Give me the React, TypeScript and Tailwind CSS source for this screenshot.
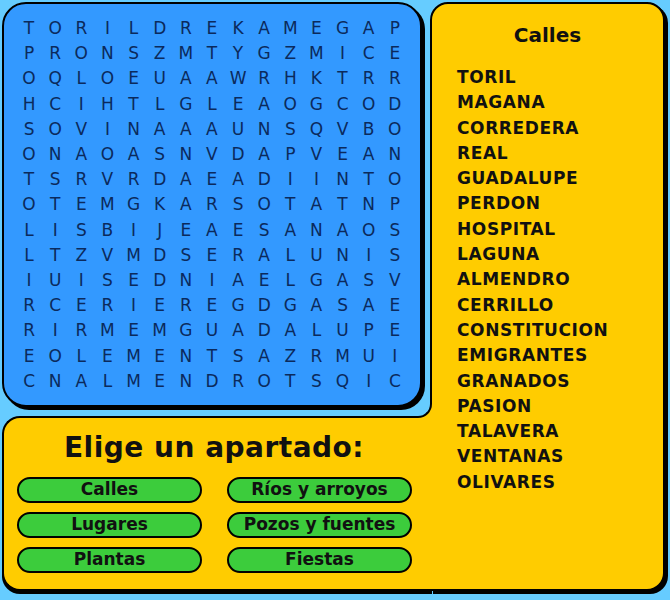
import React from "react";

const GRID = [
  "TORILDREKAMEGAP",
  "PRONSZMTYGZMICE",
  "OQLOEUAAWRHKTRR",
  "HCIHTLGLEAOGCOD",
  "SOVINAAAUNSQVBO",
  "ONAOASNVDAPVEAN",
  "TSRVRDAEADIINTO",
  "OTEMGKARSOTATNP",
  "LISBIJEAESANAOS",
  "LTZVMDSERALUNIS",
  "IUISEDNIAELGASV",
  "RCERIEREGDGASAE",
  "RIRMEMGUADALUPE",
  "EOLEMENTSAZRMUI",
  "CNALMENDROTSQIC",
];

const STREETS = [
  "TORIL",
  "MAGANA",
  "CORREDERA",
  "REAL",
  "GUADALUPE",
  "PERDON",
  "HOSPITAL",
  "LAGUNA",
  "ALMENDRO",
  "CERRILLO",
  "CONSTITUCION",
  "EMIGRANTES",
  "GRANADOS",
  "PASION",
  "TALAVERA",
  "VENTANAS",
  "OLIVARES",
];

const BUTTONS = [
  "Calles",
  "Ríos y arroyos",
  "Lugares",
  "Pozos y fuentes",
  "Plantas",
  "Fiestas",
];

export default function App() {
  return (
    <div
      className="w-[670px] h-[600px] bg-[#66ccff] p-[2px] grid grid-cols-[428px_235px] grid-rows-[414px_175px] overflow-hidden"
      style={{ fontFamily: '"DejaVu Sans", Verdana, sans-serif' }}
    >
      {/* Word search grid */}
      <div className="relative z-20 col-start-1 row-start-1 w-[420px] h-[405px] bg-[#3399ff] border-2 border-black rounded-[24px] shadow-[3px_3px_0_#000] pl-[12px] pt-[12px]">
        <div className="grid grid-cols-[repeat(15,26.14px)] grid-rows-[repeat(15,25.2px)]">
          {GRID.map((row, r) =>
            row.split("").map((ch, c) => (
              <div
                key={r + "-" + c}
                className="flex items-center justify-center text-[17px] leading-none text-[#0b2a5c]"
              >
                {ch}
              </div>
            ))
          )}
        </div>
      </div>

      {/* Right panel */}
      <div className="col-start-2 row-start-1 row-span-2 bg-[#ffcc00] border-2 border-black rounded-[18px] rounded-bl-none shadow-[3px_3px_0_#000] flex flex-col pt-[19px]">
        <div className="text-center text-[20px] leading-[24px] font-bold text-[#111]">
          Calles
        </div>
        <ul className="mt-[18px] pl-[25px]">
          {STREETS.map((s) => (
            <li
              key={s}
              className="text-[17px] leading-[25.3px] tracking-[0.6px] font-bold text-[#111]"
            >
              {s}
            </li>
          ))}
        </ul>
      </div>

      {/* Bottom panel */}
      <div className="col-start-1 row-start-2 relative z-10 mr-[-2px] bg-[#ffcc00] border-t-2 border-l-2 border-b-2 border-black rounded-l-[18px] shadow-[0_3px_0_#000] pt-[14px] pl-[13px]">
        <div className="absolute right-0 -top-[16px] w-[16px] h-[16px] bg-[#ffcc00]">
          <div className="w-full h-full bg-[#66ccff] border-r-2 border-b-2 border-black rounded-br-[14px]" />
        </div>
        <div className="w-[394px] text-center text-[28px] leading-[32px] tracking-[0.5px] font-bold text-[#111]">
          Elige un apartado:
        </div>
        <div className="mt-[13px] grid grid-cols-[185px_185px] gap-x-[25px] gap-y-[9px]">
          {BUTTONS.map((b) => (
            <div
              key={b}
              className="h-[26px] rounded-full bg-[#3ccc3c] border-2 border-black flex items-center justify-center text-[17px] font-bold text-[#111]"
            >
              {b}
            </div>
          ))}
        </div>
      </div>
    </div>
  );
}
